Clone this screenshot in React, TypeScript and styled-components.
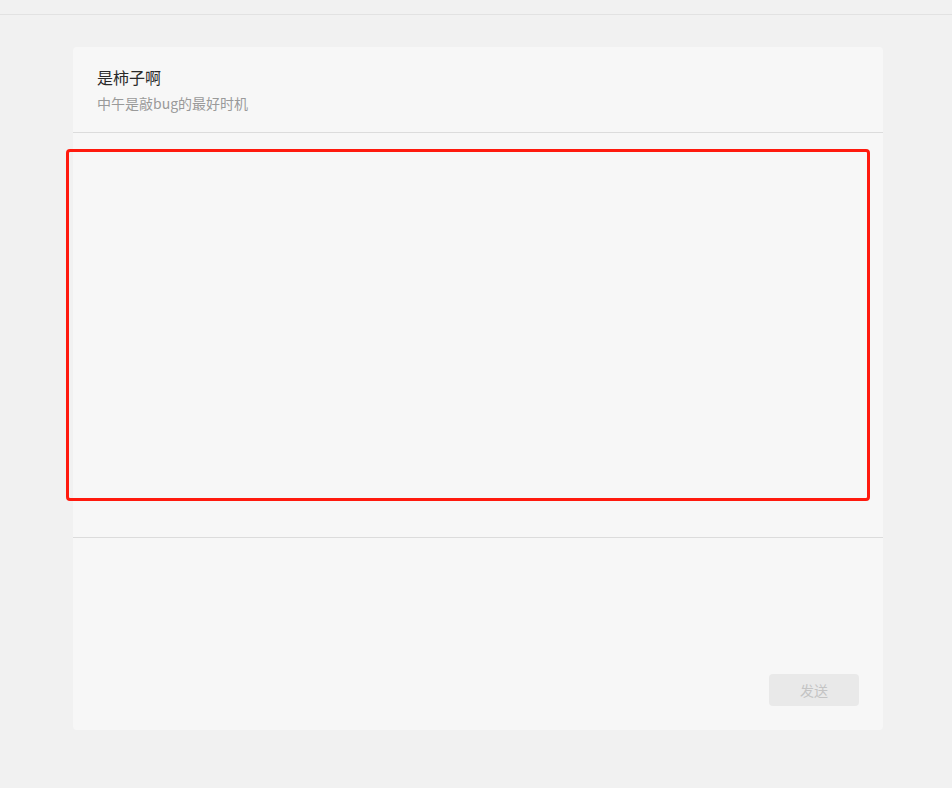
import styled, { createGlobalStyle } from "styled-components";

const GlobalStyle = createGlobalStyle`
  html, body {
    margin: 0;
    padding: 0;
    background: #f1f1f1;
    font-family: "Noto Sans CJK SC", "Noto Sans", sans-serif;
  }
`;

export default function App() {
  return (
    <>
      <GlobalStyle />
      <Page>
        <TopBar />
        <Card>
          <ChatHeader>
            <Title>是柿子啊</Title>
            <Subtitle>中午是敲bug的最好时机</Subtitle>
          </ChatHeader>
          <MessageArea>
            <MessageList />
          </MessageArea>
          <InputArea>
            <Editor />
            <Footer>
              <SendButton disabled>发送</SendButton>
            </Footer>
          </InputArea>
        </Card>
      </Page>
    </>
  );
}

const Page = styled.div`
  min-height: 788px;
  display: flex;
  flex-direction: column;
`;

const TopBar = styled.div`
  width: 100%;
  height: 14px;
  border-bottom: 1px solid #e2e2e2;
`;

const Card = styled.div`
  width: 810px;
  height: 683px;
  margin: 32px 0 0 73px;
  background: #f7f7f7;
  border-radius: 4px;
  display: flex;
  flex-direction: column;
  box-sizing: border-box;
`;

const ChatHeader = styled.div`
  height: 86px;
  padding: 19px 24px 0;
  box-sizing: border-box;
  border-bottom: 1px solid #dcdcdc;
`;

const Title = styled.div`
  font-size: 16px;
  line-height: 22px;
  color: #2a2a2a;
`;

const Subtitle = styled.div`
  margin-top: 5px;
  font-size: 14px;
  line-height: 20px;
  color: #9a9a9a;
`;

const MessageArea = styled.div`
  height: 405px;
  border-bottom: 1px solid #dcdcdc;
  padding-top: 16px;
  box-sizing: border-box;
`;

const MessageList = styled.div`
  height: 352px;
  margin: 0 13px 0 -7px;
  border: 3px solid #ff1a0e;
  border-radius: 4px;
  box-sizing: border-box;
`;

const InputArea = styled.div`
  flex: 1;
  display: flex;
  flex-direction: column;
  padding: 0 24px 24px;
`;

const Editor = styled.div`
  flex: 1;
`;

const Footer = styled.div`
  display: flex;
  justify-content: flex-end;
`;

const SendButton = styled.button`
  width: 90px;
  height: 32px;
  border: none;
  border-radius: 4px;
  background: #e9e9e9;
  color: #c4c4c4;
  font-family: "Noto Sans CJK SC", sans-serif;
  font-size: 14px;
  cursor: not-allowed;
`;
